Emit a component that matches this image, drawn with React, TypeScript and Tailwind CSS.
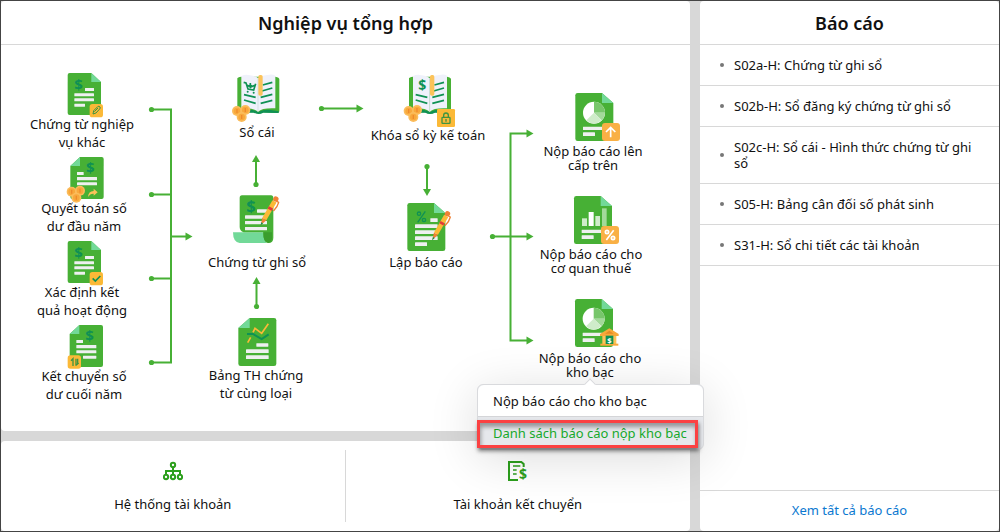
import * as React from "react";
import clsx from "clsx";

type IconProps = { children: React.ReactNode; minX: number; short?: boolean };

// Node drawings use three units per pixel; minX centres them over the label.
function IconFrame({ children, minX, short }: IconProps) {
  return (
    <svg
      viewBox={`${minX} 0 180 ${short ? 126 : 144}`}
      className={clsx("w-[60px] shrink-0 overflow-visible", short ? "h-[42px]" : "h-[48px]")}
      aria-hidden="true"
    >
      {children}
    </svg>
  );
}

function Bars({ rows }: { rows: number[][] }) {
  return (
    <g fill="#eef0f0">
      {rows.map(([x, y, w, h]) => (
        <rect key={`${x}-${y}`} x={x} y={y} width={w} height={h} rx="1" />
      ))}
    </g>
  );
}

function Sign({ x, y, size, children, fill = "#0f9154" }: {
  x: number;
  y: number;
  size: number;
  children: string;
  fill?: string;
}) {
  return (
    <text
      x={x}
      y={y}
      fill={fill}
      fontSize={size}
      fontWeight={700}
      textAnchor="middle"
      fontFamily="Open Sans, Noto Sans, sans-serif"
    >
      {children}
    </text>
  );
}

function SmallSheet({ flip }: { flip?: boolean }) {
  return (
    <g transform={flip ? "matrix(-1 0 0 1 100 0)" : undefined}>
      <path d="M6 0H71L100 27V120a6 6 0 0 1-6 6H6a6 6 0 0 1-6-6V6a6 6 0 0 1 6-6Z" fill="#47b035" />
      <path d="M71 0L100 27H71Z" fill="#72d998" />
    </g>
  );
}

function Sheet({ flip }: { flip?: boolean }) {
  return (
    <g transform={flip ? "matrix(-1 0 0 1 114 0)" : undefined}>
      <path d="M7 0H80L114 30V137a7 7 0 0 1-7 7H7a7 7 0 0 1-7-7V7a7 7 0 0 1 7-7Z" fill="#47b035" />
      <path d="M80 0L114 30H80Z" fill="#72d998" />
    </g>
  );
}

function Coins({ x, y }: { x: number; y: number }) {
  const spots = [
    [0, 3],
    [25, 0],
    [14, 21],
  ];
  return (
    <g transform={`translate(${x} ${y})`}>
      {spots.map(([cx, cy]) => (
        <g key={cx}>
          <circle cx={cx} cy={cy} r="15" fill="#fbbc5b" />
          <circle cx={cx} cy={cy} r="10" fill="#f8a83b" />
          <path d={`M${cx} ${cy - 6}V${cy + 6}`} stroke="#ee8a2c" strokeWidth="4" />
        </g>
      ))}
    </g>
  );
}

function Pen({ x, y }: { x: number; y: number }) {
  return (
    <g transform={`translate(${x} ${y})`}>
      <path d="M42 -76L54 -69Q51 -56 39 -44" fill="none" stroke="#f08135" strokeWidth="4" strokeLinecap="round" strokeLinejoin="round" />
      <g transform="rotate(30)">
        <path d="M0 0L-7 -22H7Z" fill="#f08135" />
        <path d="M0 1L-3 -9H3Z" fill="#0f9154" />
        <rect x="-7" y="-83" width="14" height="61" fill="#fbb937" />
        <rect x="-7" y="-62" width="14" height="8" fill="#e23a3a" />
        <circle cx="0" cy="-91" r="8" fill="#f08135" />
      </g>
    </g>
  );
}

function Book() {
  return (
    <g>
      <path d="M17 13Q17 10 29 8H131Q143 10 143 16V112Q143 117 136 117L95 115Q80 122 65 115H17Z" fill="#47b035" />
      <path d="M50 107Q70 107 80 115Q90 106 112 107L141 112V117L95 116Q80 124 66 116H50Z" fill="#0f9154" />
      <path d="M29 6Q42 0 55 4Q68 5 79 12V113Q66 101 29 103Z" fill="#eff1fb" />
      <path d="M79 12Q92 3 108 3Q122 -1 131 5V103Q92 101 79 113Z" fill="#eff1fb" />
      <path d="M79 12V113" stroke="#c9dbd8" strokeWidth="2" />
      <g stroke="#0f9154" strokeWidth="5">
        <path d="M93 33L122 25M91 51L122 42M87 70L122 61M87 88L122 79" />
        <path d="M37 62L72 70M37 78L72 88" />
      </g>
      <rect x="80" y="3" width="13" height="62" rx="5" fill="#fbc35a" />
    </g>
  );
}

function Pie() {
  return (
    <g transform="translate(56 59)">
      <circle r="33" fill="#fff" />
      <path d="M0 0V-33A33 33 0 0 1 33 0Z" fill="#78c66b" />
      <path d="M0 0H33A33 33 0 0 1 23 23Z" fill="#a3d99a" />
      <path d="M0 0L23 23A33 33 0 0 1 -23 23Z" fill="#cfecca" />
    </g>
  );
}

const smallRows = [
  [52, 45, 27, 9],
  [20, 61, 59, 9],
  [20, 76, 59, 9],
  [20, 92, 32, 9],
];

const flipRows = [
  [20, 45, 20, 9],
  [20, 60, 60, 10],
  [20, 76, 60, 9],
];

function VoucherIcon({ mark }: { mark: "pen" | "check" }) {
  return (
    <IconFrame minX={-47} short>
      <SmallSheet />
      <Sign x={33} y={50} size={45}>$</Sign>
      <Bars rows={smallRows} />
      <rect x="66" y="93" width="40" height="40" rx="8" fill="#fbb937" />
      {mark === "pen" ? (
        <path d="M76 123L78 113L90 101Q94 98 97 102Q99 105 96 108L85 120ZM80 116L91 105" fill="none" stroke="#3f9440" strokeWidth="3" />
      ) : (
        <path d="M75 112L83 120L98 105" fill="none" stroke="#0f9154" strokeWidth="5" />
      )}
    </IconFrame>
  );
}

function OpeningIcon() {
  return (
    <IconFrame minX={-49} short>
      <SmallSheet flip />
      <Sign x={60} y={49} size={45}>$</Sign>
      <Bars rows={flipRows} />
      <Coins x={4} y={101} />
      <path d="M53 120Q54 102 70 102V95L82 106L70 116V110Q60 109 53 120Z" fill="#fbc35a" />
    </IconFrame>
  );
}

function ClosingIcon() {
  return (
    <IconFrame minX={-47} short>
      <SmallSheet flip />
      <Sign x={60} y={49} size={45}>$</Sign>
      <Bars rows={[...flipRows, [40, 92, 40, 9]]} />
      <rect x="-6" y="91" width="40" height="40" rx="8" fill="#fbb937" />
      <path d="M4 107L10 101V123M19 101V122M19 121L27 114M24 101V116" fill="none" stroke="#3f9440" strokeWidth="4" />
    </IconFrame>
  );
}

function LedgerIcon() {
  return (
    <IconFrame minX={-14}>
      <Book />
      <path d="M36 25L43 27L49 45L66 48L72 29M45 33L57 39L70 34M56 27V40M51 34L56 40L62 34" fill="none" stroke="#0f9154" strokeWidth="5" />
      <circle cx="48" cy="53" r="3" fill="#0f9154" />
      <circle cx="66" cy="56" r="3" fill="#0f9154" />
      <Coins x={16} y={108} />
    </IconFrame>
  );
}

function LockBookIcon() {
  return (
    <IconFrame minX={-16}>
      <Book />
      <Sign x={57} y={49} size={42}>$</Sign>
      <Coins x={16} y={108} />
      <rect x="101" y="105" width="54" height="54" rx="4" fill="#fbb937" />
      <rect x="116" y="130" width="24" height="18" rx="2" fill="none" stroke="#3f9440" strokeWidth="4" />
      <path d="M121 130V124a7 7 0 0 1 14 0V130M128 135V143" fill="none" stroke="#3f9440" strokeWidth="4" />
    </IconFrame>
  );
}

function ScrollIcon() {
  return (
    <IconFrame minX={-18}>
      <path d="M0 112H100V144H20Q0 142 0 112Z" fill="#72d998" />
      <path d="M27 1H114Q121 1 121 9V128Q121 144 106 144Q90 142 91 112H32Q20 108 20 96V9Q20 1 27 1Z" fill="#47b035" />
      <path d="M106 144Q90 142 91 112H117V132Q114 142 106 144Z" fill="#3a9e2c" />
      <Sign x={54} y={50} size={50}>$</Sign>
      <Bars
        rows={[
          [72, 43, 30, 10],
          [36, 61, 66, 10],
          [36, 78, 66, 10],
          [36, 96, 66, 10],
        ]}
      />
      <Pen x={83} y={91} />
    </IconFrame>
  );
}

function TrendIcon() {
  return (
    <IconFrame minX={-37}>
      <Sheet flip />
      <path d="M28 74L37 58M44 43L50 31L70 46L90 17" fill="none" stroke="#fbb937" strokeWidth="5" />
      <path d="M26 48H44L70 63L91 49" fill="none" stroke="#0f9154" strokeWidth="6" />
      <Bars
        rows={[
          [54, 76, 36, 10],
          [23, 94, 68, 11],
          [23, 112, 68, 11],
        ]}
      />
    </IconFrame>
  );
}

function ReportIcon() {
  return (
    <IconFrame minX={-34}>
      <Sheet />
      <g fill="none" stroke="#0f9154" strokeWidth="4">
        <circle cx="35" cy="32" r="5" />
        <circle cx="50" cy="51" r="5" />
        <path d="M54 25L31 58" />
      </g>
      <Bars
        rows={[
          [69, 46, 22, 11],
          [23, 64, 68, 11],
          [23, 82, 68, 11],
          [23, 100, 68, 11],
          [23, 118, 36, 11],
        ]}
      />
      <Pen x={75} y={111} />
    </IconFrame>
  );
}

const submitRows = [
  [23, 101, 60, 10],
  [23, 118, 36, 11],
];

function UploadIcon() {
  return (
    <IconFrame minX={-37}>
      <Sheet />
      <Pie />
      <Bars rows={submitRows} />
      <rect x="80" y="90" width="54" height="54" rx="9" fill="#f9b045" />
      <path d="M106 133V103M92 117L106 103L120 117" fill="none" stroke="#fff" strokeWidth="5" />
    </IconFrame>
  );
}

function TaxIcon() {
  return (
    <IconFrame minX={-39}>
      <Sheet />
      <rect x="24" y="67" width="15" height="23" fill="#cfecca" />
      <rect x="44" y="48" width="15" height="42" fill="#fff" />
      <rect x="64" y="60" width="14" height="30" fill="#cfecca" />
      <rect x="84" y="37" width="14" height="53" fill="#a3d99a" />
      <Bars rows={submitRows} />
      <rect x="81" y="90" width="54" height="54" rx="9" fill="#f9b045" />
      <g fill="none" stroke="#fff" strokeWidth="5">
        <circle cx="99" cy="108" r="5" />
        <circle cx="117" cy="126" r="5" />
        <path d="M119 103L97 132" />
      </g>
    </IconFrame>
  );
}

function TreasuryIcon() {
  return (
    <IconFrame minX={-45}>
      <Sheet />
      <Pie />
      <Bars rows={submitRows} />
      <path d="M82 110H124V138H82Z" fill="#fbc35a" />
      <path d="M103 88L131 105V111H75V105Z" fill="#f9a83a" />
      <path d="M103 95L116 104H90Z" fill="#e58a25" />
      <rect x="76" y="134" width="54" height="6" fill="#f9a83a" />
      <rect x="92" y="110" width="23" height="25" fill="#0f9154" />
      <Sign x={103} y={131} size={23} fill="#ffffff">$</Sign>
    </IconFrame>
  );
}

type FlowNode = {
  label: string;
  icon: React.ReactNode;
  place: string;
  leading?: string;
};

const nodes: FlowNode[] = [
  { label: "Chứng từ nghiệp\nvụ khác", icon: <VoucherIcon mark="pen" />, place: "left-[21px] top-[28px]" },
  { label: "Quyết toán số\ndư đầu năm", icon: <OpeningIcon />, place: "left-[23px] top-[112px]" },
  { label: "Xác định kết\nquả hoạt động", icon: <VoucherIcon mark="check" />, place: "left-[21px] top-[196px]" },
  { label: "Kết chuyển số\ndư cuối năm", icon: <ClosingIcon />, place: "left-[23px] top-[280px]" },
  { label: "Sổ cái", icon: <LedgerIcon />, place: "left-[196px] top-[29px] gap-px" },
  { label: "Chứng từ ghi sổ", icon: <ScrollIcon />, place: "left-[196px] top-[150px] gap-[10px]" },
  { label: "Bảng TH chứng\ntừ cùng loại", icon: <TrendIcon />, place: "left-[195px] top-[273px]" },
  { label: "Khóa sổ kỳ kế toán", icon: <LockBookIcon />, place: "left-[367px] top-[29px] gap-1" },
  { label: "Lập báo cáo", icon: <ReportIcon />, place: "left-[365px] top-[158px] gap-0.5" },
  { label: "Nộp báo cáo lên\ncấp trên", icon: <UploadIcon />, place: "left-[532px] top-[48px] gap-[3px]", leading: "leading-[14px]" },
  { label: "Nộp báo cáo cho\ncơ quan thuế", icon: <TaxIcon />, place: "left-[530px] top-[151px] gap-[3px]", leading: "leading-[14px]" },
  { label: "Nộp báo cáo cho\nkho bạc", icon: <TreasuryIcon />, place: "left-[529px] top-[254px] gap-1", leading: "leading-[14px]" },
];

const dots = [
  [150.5, 64.5],
  [150.5, 149.5],
  [150.5, 233.5],
  [150.5, 317.5],
  [320.5, 63.5],
  [255, 139.5],
  [255.5, 261.5],
  [426, 121.5],
  [491.5, 191.5],
];

const arrows = [
  [191.5, 191.5, 0],
  [362.5, 63.5, 0],
  [532.5, 88.5, 0],
  [532.5, 191.5, 0],
  [532.5, 295.5, 0],
  [255, 110, -90],
  [255.5, 232, -90],
  [426, 151, 90],
];

function Connectors() {
  return (
    <svg
      viewBox="0 0 689 386"
      className="pointer-events-none absolute left-0 top-0 h-[386px] w-[689px]"
      aria-hidden="true"
    >
      <g fill="none" stroke="#47b035" strokeWidth="2">
        <path d="M150 64.5H170V317.5H150M150 149.5H170M150 233.5H170M170 191.5H187" />
        <path d="M320 63.5H357M255 139V115M255.5 261V237M426 121V146" />
        <path d="M528 88.5H509.5V295.5H528M491 191.5H528" />
      </g>
      <g fill="#47b035">
        {dots.map(([x, y]) => (
          <circle key={`${x}-${y}`} cx={x} cy={y} r="2.6" />
        ))}
        {arrows.map(([x, y, turn]) => (
          <path key={`${x}-${y}`} d="M0 0L-7 -4V4Z" transform={`translate(${x} ${y}) rotate(${turn})`} />
        ))}
      </g>
    </svg>
  );
}

function NodeMenu() {
  return (
    <div
      role="menu"
      className="absolute left-[476px] top-[339px] z-10 w-[227px] rounded-md border border-[#d9dadd] bg-[#e6e8ec] shadow-[0_8px_50px_rgba(0,0,0,0.14)]"
    >
      <span className="absolute -top-[5px] left-[108px] size-2 rotate-45 border-l border-t border-[#d9dadd] bg-white" />
      <button
        type="button"
        role="menuitem"
        className="relative flex h-8 w-full items-center whitespace-nowrap rounded-t-md border-b border-[#d4d5d8] bg-white pl-[15px] pt-0.5"
      >
        Nộp báo cáo cho kho bạc
      </button>
      <button
        type="button"
        role="menuitem"
        className="relative flex h-8 w-full items-center whitespace-nowrap pl-[15px] pt-0.5 text-[#17a82b]"
      >
        Danh sách báo cáo nộp kho bạc
        <span className="absolute -left-px right-[5px] top-[3px] h-[28px] border-[3px] border-[#fb4142] shadow-[1px_3px_4px_rgba(0,0,0,0.5),inset_1px_4px_4px_rgba(0,0,0,0.35)]" />
      </button>
    </div>
  );
}

function AccountTreeIcon() {
  return (
    <svg viewBox="0 0 60 60" className="size-5" fill="none" stroke="#2c9f1c" strokeWidth="6" aria-hidden="true">
      <circle cx="30" cy="12" r="6.5" />
      <circle cx="9" cy="48" r="6.5" />
      <circle cx="30" cy="48" r="6.5" />
      <circle cx="51" cy="48" r="6.5" />
      <path d="M30 18V42M9 42V30H51V42" />
    </svg>
  );
}

function TransferIcon() {
  return (
    <svg viewBox="0 0 60 60" className="size-5 overflow-visible" aria-hidden="true">
      <path d="M30 57H3V3H40L47 9V18" fill="none" stroke="#2c9f1c" strokeWidth="6" />
      <path d="M15 15H37M15 27H26M15 39H26" stroke="#2c9f1c" strokeWidth="5" />
      <Sign x={45} y={55} size={42} fill="#2c9f1c">$</Sign>
    </svg>
  );
}

const reports = [
  "S02a-H: Chứng từ ghi sổ",
  "S02b-H: Sổ đăng ký chứng từ ghi sổ",
  "S02c-H: Sổ cái - Hình thức chứng từ ghi sổ",
  "S05-H: Bảng cân đối số phát sinh",
  "S31-H: Sổ chi tiết các tài khoản",
];

function PanelTitle({ children }: { children: React.ReactNode }) {
  return (
    <h2 className="flex h-11 items-center justify-center border-b border-[#d8d8d8] text-lg font-semibold">
      {children}
    </h2>
  );
}

export default function App() {
  return (
    <div className="grid min-h-screen grid-cols-[minmax(0,1fr)_299px] gap-[10px] border border-[#444444] bg-[#d8d8d8] font-['Noto_Sans',sans-serif] text-[13px] text-[#111111]">
      <main className="flex flex-col gap-[10px]">
        <section className="relative z-10 flex-1 rounded-sm bg-white">
          <PanelTitle>Nghiệp vụ tổng hợp</PanelTitle>
          <div className="relative h-[386px]">
            <Connectors />
            {nodes.map((node) => (
              <button
                key={node.label}
                type="button"
                className={clsx("absolute flex w-[120px] flex-col items-center", node.place)}
              >
                {node.icon}
                <span className={clsx("whitespace-pre text-center", node.leading ?? "leading-[18px]")}>
                  {node.label}
                </span>
              </button>
            ))}
            <NodeMenu />
          </div>
        </section>

        <section className="grid grid-cols-2 rounded-sm bg-white py-[9px]">
          <button type="button" className="flex h-[72px] flex-col items-center gap-[14px] border-r border-[#d8d8d8] pt-[11px]">
            <AccountTreeIcon />
            <span className="leading-[18px]">Hệ thống tài khoản</span>
          </button>
          <button type="button" className="flex h-[72px] flex-col items-center gap-[14px] pt-[11px]">
            <TransferIcon />
            <span className="leading-[18px]">Tài khoản kết chuyển</span>
          </button>
        </section>
      </main>

      <aside className="flex flex-col rounded-sm bg-white">
        <PanelTitle>Báo cáo</PanelTitle>
        <ul className="flex-1">
          {reports.map((report) => (
            <li key={report} className="flex items-center gap-[10px] border-b border-[#d8d8d8] py-3 pl-5 pr-4">
              <span className="size-1 shrink-0 rounded-full bg-[#777777]" />
              <a href="#" className="leading-4">
                {report}
              </a>
            </li>
          ))}
        </ul>
        <div className="flex h-[41px] items-center justify-center border-t border-[#d8d8d8]">
          <a href="#" className="text-[#0b78d0]">
            Xem tất cả báo cáo
          </a>
        </div>
      </aside>
    </div>
  );
}
